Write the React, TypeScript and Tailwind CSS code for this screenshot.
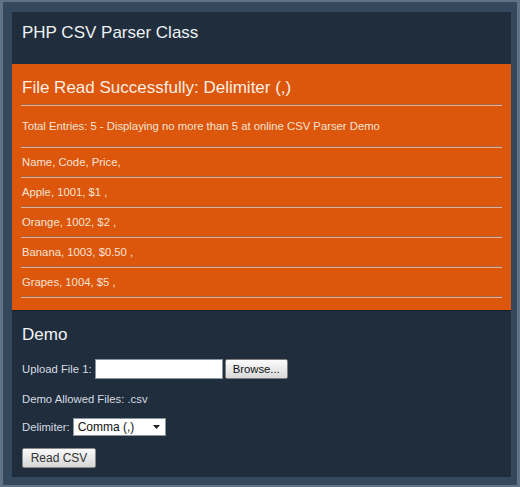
import React from 'react';

const rows = ['Name, Code, Price,', 'Apple, 1001, $1 ,', 'Orange, 1002, $2 ,', 'Banana, 1003, $0.50 ,', 'Grapes, 1004, $5 ,'];

function Rule() {
  return <div className="h-[2px] border-t border-[#a8644a] border-b border-b-[#eab08e]" />;
}

export default function App() {
  return (
    <div
      className="w-[520px] h-[487px] bg-[#34495e] border-l-[3px] border-r-[3px] border-t-2 border-b-2 border-[#5f7286] pl-[9px] pr-[6px] pt-[10px] pb-[8px]"
      style={{ fontFamily: '"Liberation Sans", Arial, sans-serif' }}
    >
      <div className="h-[465px] bg-[#1f2d3c] flex flex-col">
        <div className="h-[52px] px-[10px] pt-[9px]">
          <h1 className="text-[17px] leading-[24px] text-[#eef1f4]">PHP CSV Parser Class</h1>
        </div>

        <div className="bg-[#dc560b] pl-[9px] pr-[9px] pb-[12px] border-b border-[#16202b] text-[#f7e4d6]">
          <div className="pt-[12px] pb-[4px] pl-[1px]">
            <h2 className="text-[17px] leading-[24px] text-[#fbeee4]">File Read Successfully: Delimiter (,)</h2>
          </div>
          <Rule />
          <div className="h-[40px] flex items-center pl-[1px] text-[11.3px]">
            Total Entries: 5 - Displaying no more than 5 at online CSV Parser Demo
          </div>
          <Rule />
          {rows.map((r) => (
            <div key={r}>
              <div className="h-[28px] flex items-center pl-[1px] text-[11.3px]">{r}</div>
              <Rule />
            </div>
          ))}
        </div>

        <div className="px-[10px] pt-[12px] text-[11.3px] text-[#d6dce2]">
          <h2 className="text-[17px] leading-[24px] text-[#f1f4f7]">Demo</h2>
          <div className="mt-[12px] h-[20px] flex items-center">
            <span>Upload File 1:</span>
            <div className="ml-[3px] w-[128px] h-[20px] bg-white border border-[#8a95a0]" />
            <button className="ml-[2px] w-[63px] h-[20px] rounded-[2px] border border-[#7d7d7d] bg-gradient-to-b from-[#fbfbfb] to-[#d9d9d9] text-[11.3px] text-[#111]">
              Browse...
            </button>
          </div>
          <div className="mt-[12px] h-[16px] flex items-center">Demo Allowed Files: .csv</div>
          <div className="mt-[11px] h-[18px] flex items-center">
            <span>Delimiter:</span>
            <div className="ml-[3px] w-[93px] h-[18px] bg-white border border-[#8a95a0] flex items-center justify-between pl-[4px] pr-[5px] text-[12px] text-[#111]">
              <span>Comma (,)</span>
              <svg width="7" height="4" viewBox="0 0 7 4">
                <path d="M0 0h7L3.5 4z" fill="#222" />
              </svg>
            </div>
          </div>
          <button className="mt-[12px] w-[74px] h-[20px] rounded-[2px] border border-[#8a8a8a] bg-gradient-to-b from-[#fafafa] to-[#d6d6d6] text-[12px] text-[#333]">
            Read CSV
          </button>
        </div>
      </div>
    </div>
  );
}
